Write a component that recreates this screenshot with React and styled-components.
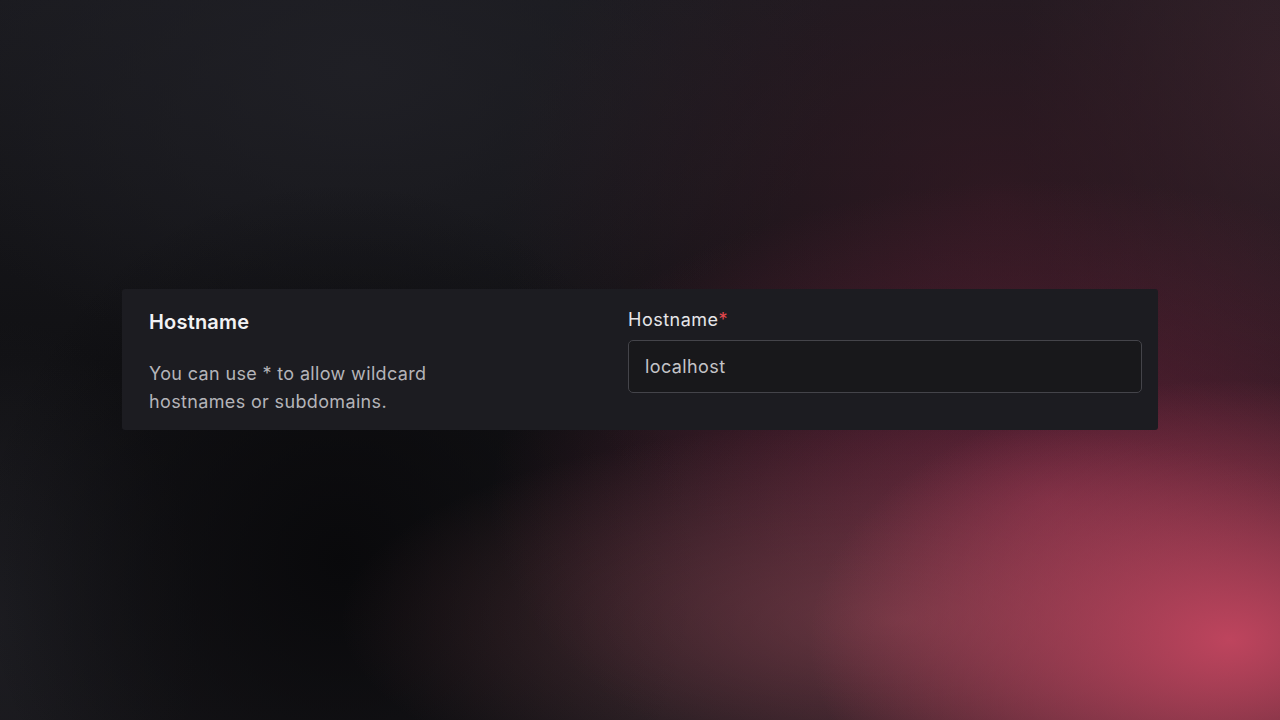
import React from 'react';
import styled, { createGlobalStyle } from 'styled-components';

const GlobalStyle = createGlobalStyle`
  html, body {
    margin: 0;
    padding: 0;
    height: 100%;
  }
  body {
    font-family: Inter, 'Noto Sans', sans-serif;
    background: #111114;
  }
`;

const Backdrop = styled.div`
  width: 1280px;
  height: 720px;
  overflow: hidden;
  display: flex;
  flex-direction: column;
  align-items: center;
  justify-content: center;
  background:
    radial-gradient(ellipse 420px 260px at 1230px 640px, rgba(196, 70, 96, 0.95), rgba(196, 70, 96, 0) 100%),
    radial-gradient(ellipse 560px 200px at 900px 620px, rgba(150, 80, 90, 0.5), rgba(150, 80, 90, 0) 100%),
    radial-gradient(ellipse 560px 320px at 1050px 500px, rgba(130, 40, 70, 0.65), rgba(130, 40, 70, 0) 100%),
    radial-gradient(ellipse 500px 400px at 1000px 200px, rgba(60, 26, 38, 0.65), rgba(60, 26, 38, 0) 100%),
    radial-gradient(ellipse 260px 420px at 1280px 80px, rgba(55, 36, 44, 0.8), rgba(55, 36, 44, 0) 100%),
    radial-gradient(ellipse 360px 380px at 340px 560px, rgba(8, 8, 10, 0.9), rgba(8, 8, 10, 0) 100%),
    radial-gradient(ellipse 200px 300px at 0px 620px, rgba(30, 30, 35, 0.8), rgba(30, 30, 35, 0) 100%),
    radial-gradient(ellipse 480px 300px at 360px 70px, rgba(32, 32, 38, 0.9), rgba(32, 32, 38, 0) 100%),
    linear-gradient(180deg, #1a1a1f 0%, #111114 50%, #17161a 100%);
`;

const Card = styled.section`
  width: 1036px;
  box-sizing: border-box;
  margin-bottom: 2px;
  padding: 20px 16px 14px 27px;
  background: #1c1c21;
  border-radius: 3px;
  display: grid;
  grid-template-columns: 451px 1fr;
  column-gap: 28px;
`;

const Info = styled.div`
  display: flex;
  flex-direction: column;
  gap: 26px;
  padding-top: 1px;
`;

const Title = styled.h3`
  margin: 0;
  font-size: 20px;
  line-height: 24px;
  font-weight: 600;
  color: #f2f2f4;
  letter-spacing: 0.2px;
`;

const Description = styled.p`
  margin: 0;
  max-width: 340px;
  font-size: 18px;
  line-height: 28px;
  color: #b4b4b9;
  letter-spacing: 0.35px;
`;

const Field = styled.div`
  display: flex;
  flex-direction: column;
  gap: 9px;
`;

const Label = styled.label`
  font-size: 18px;
  line-height: 22px;
  color: #e6e6e9;
  letter-spacing: 0.5px;
`;

const Required = styled.span`
  color: #e5484d;
`;

const Input = styled.input`
  box-sizing: border-box;
  width: 100%;
  height: 53px;
  padding: 0 16px;
  background: #18181b;
  border: 1px solid #44444a;
  border-radius: 5px;
  outline: none;
  font-family: Inter, 'Noto Sans', sans-serif;
  font-size: 18px;
  letter-spacing: 0.4px;
  color: #c4c4c8;
`;

const App = () => {
  return (
    <>
      <GlobalStyle />
      <Backdrop>
        <Card>
          <Info>
            <Title>Hostname</Title>
            <Description>
              You can use * to allow wildcard hostnames or subdomains.
            </Description>
          </Info>
          <Field>
            <Label htmlFor="hostname">
              Hostname<Required>*</Required>
            </Label>
            <Input id="hostname" defaultValue="localhost" />
          </Field>
        </Card>
      </Backdrop>
    </>
  );
};

export default App;
